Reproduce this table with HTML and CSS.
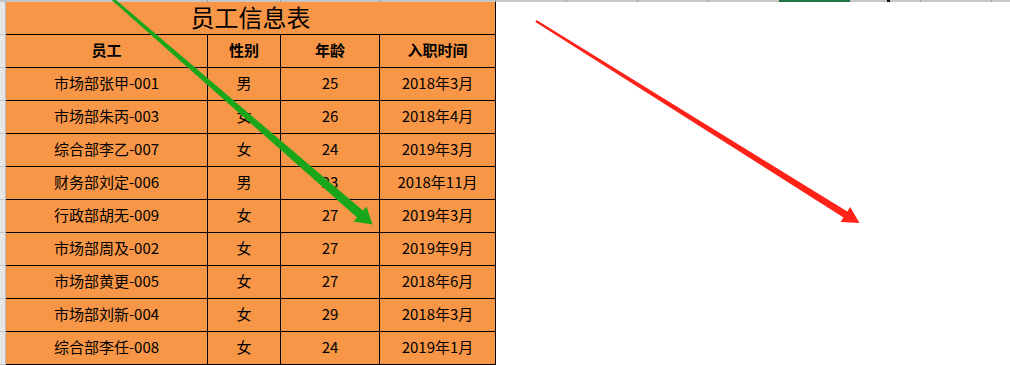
FILE: index.html
```html
<!DOCTYPE html>
<html lang="zh-CN">
<head>
<meta charset="utf-8">
<title>员工信息表</title>
<link rel="stylesheet" href="styles.css">
</head>
<body>
<div class="sheet">
  <div class="colbar">
    <span class="seg s-corner"></span>
    <span class="seg s-a"></span>
    <span class="seg s-b"></span>
    <span class="seg s-c"></span>
    <span class="seg s-d"></span>
    <span class="seg s-n"></span>
    <span class="seg s-n"></span>
    <span class="seg s-n"></span>
    <span class="seg s-n s-plain"></span>
    <span class="seg s-sel"></span>
    <span class="seg s-n s-cursor"></span>
    <span class="seg s-n"></span>
    <span class="seg s-rest"></span>
  </div>
  <div class="grid">
    <div class="rh"></div><div class="title">员工信息表</div>
    <div class="rh"></div><div class="c hd">员工</div><div class="c hd">性别</div><div class="c hd">年龄</div><div class="c hd">入职时间</div>
    <div class="rh"></div><div class="c">市场部张甲-001</div><div class="c">男</div><div class="c">25</div><div class="c">2018年3月</div>
    <div class="rh"></div><div class="c">市场部朱丙-003</div><div class="c">女</div><div class="c">26</div><div class="c">2018年4月</div>
    <div class="rh"></div><div class="c">综合部李乙-007</div><div class="c">女</div><div class="c">24</div><div class="c">2019年3月</div>
    <div class="rh"></div><div class="c">财务部刘定-006</div><div class="c">男</div><div class="c">23</div><div class="c">2018年11月</div>
    <div class="rh"></div><div class="c">行政部胡无-009</div><div class="c">女</div><div class="c">27</div><div class="c">2019年3月</div>
    <div class="rh"></div><div class="c">市场部周及-002</div><div class="c">女</div><div class="c">27</div><div class="c">2019年9月</div>
    <div class="rh"></div><div class="c">市场部黄更-005</div><div class="c">女</div><div class="c">27</div><div class="c">2018年6月</div>
    <div class="rh"></div><div class="c">市场部刘新-004</div><div class="c">女</div><div class="c">29</div><div class="c">2018年3月</div>
    <div class="rh"></div><div class="c">综合部李任-008</div><div class="c">女</div><div class="c">24</div><div class="c">2019年1月</div>
  </div>
  <svg class="arrows" width="1010" height="365" viewBox="0 0 1010 365" xmlns="http://www.w3.org/2000/svg">
    <polygon class="green" points="114.2,-1.5 362.9,210.6 366.5,206.4 372.5,224.5 353.5,221.6 357.1,217.4 111.8,0.3"/>
    <polygon class="red" points="536.6,19.9 847.3,211.5 850.2,206.9 859.5,223 840.6,222.1 843.5,217.5 535.4,21.9"/>
  </svg>
</div>
</body>
</html>
```
FILE: styles.css
```css
* { box-sizing: border-box; }
html, body { margin: 0; padding: 0; background: #ffffff; }
body {
  width: 1010px;
  height: 365px;
  overflow: hidden;
  font-family: "Noto Sans CJK SC", "Noto Sans", sans-serif;
  color: #000000;
}
.sheet { position: relative; width: 1010px; height: 365px; }

.colbar { display: flex; height: 2px; background: #c6c6c6; }
.seg { height: 2px; border-right: 1px solid #9a9a9a; }
.s-corner { width: 6px; border-right-color: #b4b4b4; }
.s-a { width: 202px; }
.s-b { width: 73px; }
.s-c { width: 99px; }
.s-d { width: 116px; }
.s-n { width: 71px; }
.s-plain { width: 70px; border-right: none; }
.s-sel { width: 71px; background: #217346; border-right: none; }
.s-cursor { position: relative; }
.s-cursor::after {
  content: "";
  position: absolute;
  left: 37px;
  top: 0;
  width: 3px;
  height: 2px;
  background: #111111;
}
.s-rest { flex: 1; border-right: none; }

.grid {
  display: grid;
  grid-template-columns: 6px 202px 73px 99px 116px;
  grid-auto-rows: 33px;
}
.rh {
  background: #e6e6e6;
  border-right: 1px solid #bababa;
  border-bottom: 1px solid #c4c4c4;
}
.title, .c {
  background: #f79646;
  border-right: 1px solid #000000;
  border-bottom: 1px solid #000000;
  display: flex;
  align-items: center;
  justify-content: center;
  white-space: nowrap;
}
.title {
  grid-column: 2 / 6;
  font-size: 24px;
  line-height: 1;
  padding-bottom: 3px;
}
.c { font-size: 15px; line-height: 1; padding-bottom: 4px; }
.hd { font-weight: 700; font-size: 15px; }

.arrows { position: absolute; left: 0; top: 0; pointer-events: none; }
.green { fill: #1aa61a; }
.red { fill: #ff2219; }
```
